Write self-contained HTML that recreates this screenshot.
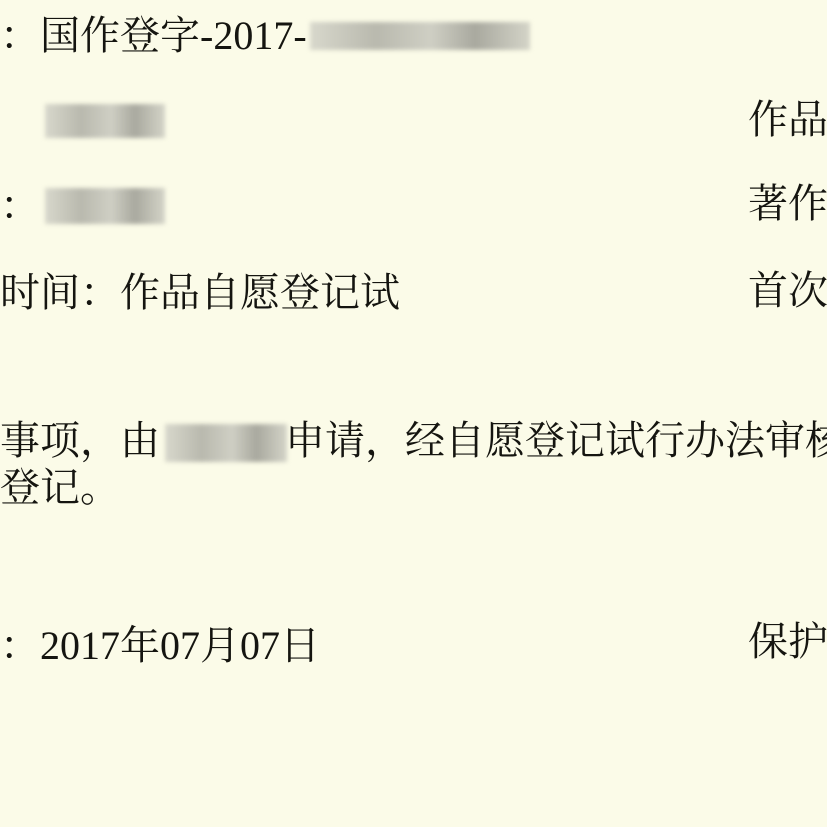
<!DOCTYPE html>
<html><head><meta charset="utf-8"><style>
html,body{margin:0;padding:0;}
body{width:827px;height:827px;overflow:hidden;background:#fbfbe8;position:relative;font-family:"Liberation Serif","Noto Serif CJK SC",serif;color:#151510;font-size:40px;}
.t{position:absolute;white-space:nowrap;line-height:1;}
.b{position:absolute;background:linear-gradient(90deg,#d8d8cc,#b9b9ae 30%,#cfcfc4 55%,#a9a99f 75%,#d4d4c8);filter:blur(2px);}
</style></head><body>
<div class="t" style="left:0;top:16px;">：国作登字-2017-</div>
<div class="b" style="left:310px;top:22px;width:220px;height:28px;"></div>
<div class="b" style="left:45px;top:104px;width:120px;height:34px;"></div>
<div class="t" style="left:748px;top:100px;">作品</div>
<div class="t" style="left:0;top:186px;">：</div>
<div class="b" style="left:45px;top:188px;width:120px;height:36px;"></div>
<div class="t" style="left:748px;top:184px;">著作</div>
<div class="t" style="left:0;top:273px;">时间：作品自愿登记试</div>
<div class="t" style="left:748px;top:271px;">首次</div>
<div class="t" style="left:0;top:421px;">事项，由<span style="display:inline-block;width:125px"></span>申请，经自愿登记试行办法审核</div>
<div class="b" style="left:165px;top:424px;width:122px;height:38px;"></div>
<div class="t" style="left:0;top:468px;">登记。</div>
<div class="t" style="left:0;top:626px;">：2017年07月07日</div>
<div class="t" style="left:748px;top:622px;">保护</div>
</body></html>
